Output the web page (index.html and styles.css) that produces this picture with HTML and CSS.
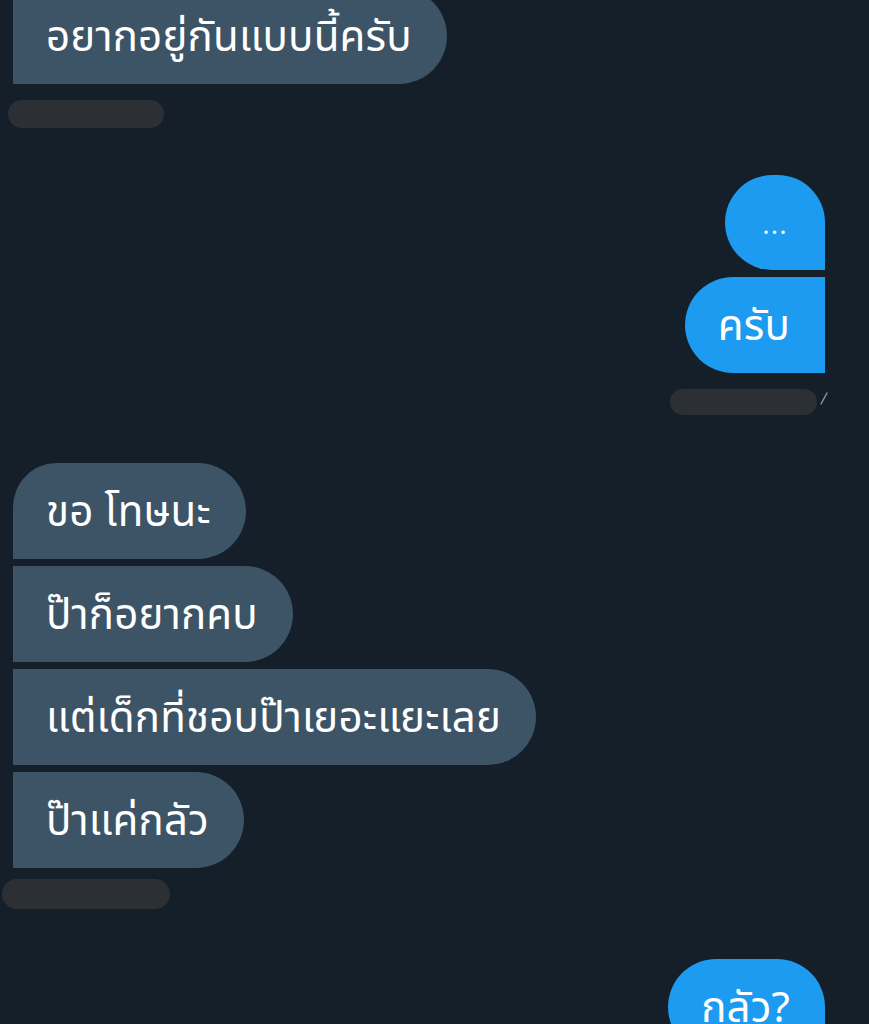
FILE: index.html
```html
<!DOCTYPE html>
<html lang="th">
<head>
<meta charset="utf-8">
<link rel="stylesheet" href="styles.css">
</head>
<body>
<div class="chat">
  <div class="group in g1">
    <div class="bubble in-last">อยากอยู่กันแบบนี้ครับ</div>
    <div class="stamp st1"></div>
  </div>

  <div class="group out g2">
    <div class="bubble out-first dots">...</div>
    <div class="bubble out-last">ครับ</div>
    <div class="stamp-row">
      <div class="stamp st2"></div>
      <svg class="tick" width="8" height="14" viewBox="0 0 8 14"><line x1="1" y1="13" x2="7" y2="2" stroke="#8a9aa8" stroke-width="1.4" stroke-linecap="round"/></svg>
    </div>
  </div>

  <div class="group in g3">
    <div class="bubble in-first">ขอ โทษนะ</div>
    <div class="bubble in-mid">ป๊าก็อยากคบ</div>
    <div class="bubble in-mid">แต่เด็กที่ชอบป๊าเยอะแยะเลย</div>
    <div class="bubble in-last">ป๊าแค่กลัว</div>
    <div class="stamp st3"></div>
  </div>

  <div class="group out g4">
    <div class="bubble out-first">กลัว?</div>
  </div>
</div>
</body>
</html>
```
FILE: styles.css
```css
html, body {
  margin: 0;
  padding: 0;
  background: #151f2a;
  height: 1024px;
  overflow: hidden;
}

.chat {
  display: flex;
  flex-direction: column;
  margin-top: -12px;
  font-family: "Noto Sans Thai", "Noto Sans", "DejaVu Sans", sans-serif;
  color: #ffffff;
}

.group {
  display: flex;
  flex-direction: column;
  gap: 7px;
}

.group.in {
  align-items: flex-start;
  padding-left: 13px;
}

.group.out {
  align-items: flex-end;
  padding-right: 44px;
}

.g2 { margin-top: 47px; }
.g3 { margin-top: 48px; }
.g4 { margin-top: 50px; }

.bubble {
  height: 96px;
  box-sizing: border-box;
  display: flex;
  align-items: center;
  padding: 3px 35px 0 33px;
  font-size: 42px;
  letter-spacing: 0.2px;
  white-space: nowrap;
  border-radius: 48px;
}

.in .bubble { background: #3d5466; }
.out .bubble { background: #1d9bf0; }

.in-first { border-radius: 44px 48px 48px 0; }
.in-mid { border-radius: 0 48px 48px 0; }
.in-last { border-radius: 0 48px 48px 0; }

.out-first { border-radius: 48px 48px 0 48px; }
.out-last { border-radius: 48px 0 0 48px; }

.dots {
  height: 95px;
  padding: 6px 37px 0 38px;
  font-size: 26px;
  letter-spacing: 1.5px;
}

.stamp {
  background: #2c3035;
  border-radius: 15px;
}

.st1 {
  width: 156px;
  height: 28px;
  margin-top: 9px;
  margin-left: -5px;
}

.stamp-row {
  display: flex;
  align-items: flex-start;
  gap: 3px;
  margin-top: 9px;
  margin-right: -3px;
}

.st2 {
  width: 147px;
  height: 26px;
}

.tick { margin-top: 2px; }

.st3 {
  width: 168px;
  height: 30px;
  margin-top: 4px;
  margin-left: -11px;
}
```
